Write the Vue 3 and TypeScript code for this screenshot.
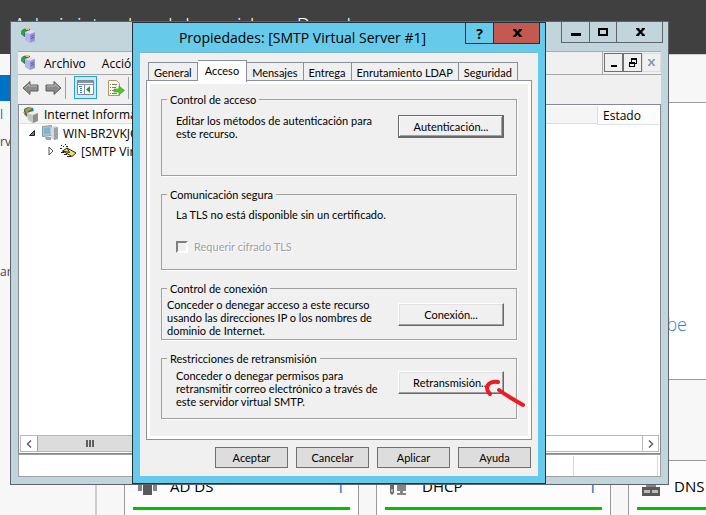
<script setup lang="ts">
import { ref } from 'vue'

interface Role { name: string; icon: 'adds' | 'dhcp' | 'dns'; count: number }

const roles: Role[] = [
  { name: 'AD DS', icon: 'adds', count: 1 },
  { name: 'DHCP', icon: 'dhcp', count: 1 },
  { name: 'DNS', icon: 'dns', count: 1 },
]
const tabs: string[] = ['General', 'Acceso', 'Mensajes', 'Entrega', 'Enrutamiento LDAP', 'Seguridad']
const activeTab = ref<string>('Acceso')
const actions: string[] = ['Aceptar', 'Cancelar', 'Aplicar', 'Ayuda']
const requireTls = ref<boolean>(false)
</script>

<template>
  <div class="desktop">
    <header class="manager-head">Administrador del servidor <span class="crumb">▸</span> Panel</header>
    <div class="manager-body">
      <nav class="sidebar">
        <span class="side-active"></span>
        <span class="side-item">l</span>
        <span class="side-item">rvi</span>
        <span class="side-item side-last">ar</span>
      </nav>
      <main class="board">
        <div class="band"></div>
        <section class="welcome"><span>be</span></section>
        <div class="roles">
          <article v-for="role in roles" :key="role.name" class="role">
            <div class="role-head">
              <svg v-if="role.icon === 'adds'" width="20" height="20" viewBox="0 0 20 20">
                <path fill="#858585" d="M0 3h4v10H0zM15 3h4v10h-4z" />
                <path fill="#595959" d="M5 1h9v16H5z" />
              </svg>
              <svg v-else-if="role.icon === 'dhcp'" width="20" height="20" viewBox="0 0 20 20">
                <path fill="#6b6b6b" d="M0 2h4v13l-2 2-2-2z" />
                <path fill="#858585" d="M7 2h9v11H7zM10 13h3v2h3v2H7v-2h3z" />
                <path fill="#fff" d="M1.500 11h1v3h-1z" />
              </svg>
              <svg v-else width="20" height="20" viewBox="0 0 20 20">
                <path fill="#858585" d="M4 3h10v6H4z" />
                <path fill="#595959" d="M0 9h18v9H0z" />
                <path fill="#bbb" d="M2 12h6v3H2zM10 12h6v3h-6z" />
              </svg>
              <h2>{{ role.name }}</h2>
              <span class="count">{{ role.count }}</span>
            </div>
            <div class="role-bar"></div>
          </article>
        </div>
      </main>
    </div>

    <section class="console">
      <div class="console-title">
        <svg width="16" height="16" viewBox="0 0 16 16">
          <path fill="#2462ad" d="M1 2l4-2 4 1v6L4 9 0 6z" />
          <path fill="#35a03a" d="M0 3l3-2 2 2-2 3 1 3-3-2z" />
          <path fill="#f0c52e" d="M4 0h4v2H5z" />
          <path fill="#dcdcfa" d="M4 4l5-2 5 2v9l-5 2-5-3z" />
          <path fill="#b4b4ea" d="M4 4l5 2v9l-5-3z" />
          <path fill="#9896d2" d="M9 6l5-2v9l-5 2z" />
          <path fill="#5a579c" d="M10 8l3-1v1l-3 1zM10 10l3-1v1l-3 1z" />
        </svg>
        <div class="window-buttons">
          <button type="button" aria-label="Minimizar">
            <svg width="14" height="12" viewBox="0 0 14 12"><path d="M2 7h10v3H2z" /></svg>
          </button>
          <button type="button" aria-label="Maximizar">
            <svg width="14" height="12" viewBox="0 0 14 12"><path fill-rule="evenodd" d="M2 2h10v8H2zM4 4v4h6V4z" /></svg>
          </button>
          <button type="button" class="wide" aria-label="Cerrar">
            <svg width="14" height="12" viewBox="0 0 14 12"><path d="M3 2h3l1 2h1l1-2h3v1L9 6l3 3v1H9L8 8H7l-1 2H3V9l3-3-3-3z" /></svg>
          </button>
        </div>
      </div>

      <div class="client">
        <div class="menubar">
          <div class="menus">
            <svg width="16" height="16" viewBox="0 0 16 16">
              <path fill="#2462ad" d="M1 2l4-2 4 1v6L4 9 0 6z" />
              <path fill="#35a03a" d="M0 3l3-2 2 2-2 3 1 3-3-2z" />
              <path fill="#f0c52e" d="M4 0h4v2H5z" />
              <path fill="#dcdcfa" d="M4 4l5-2 5 2v9l-5 2-5-3z" />
              <path fill="#b4b4ea" d="M4 4l5 2v9l-5-3z" />
              <path fill="#9896d2" d="M9 6l5-2v9l-5 2z" />
              <path fill="#5a579c" d="M10 8l3-1v1l-3 1zM10 10l3-1v1l-3 1z" />
            </svg>
            <button type="button">Archivo</button>
            <button type="button">Acción</button>
          </div>
          <div class="mdi">
            <button type="button" aria-label="Minimizar ventana">
              <svg width="11" height="11" viewBox="0 0 11 11"><path d="M3 8h6v2H3z" /></svg>
            </button>
            <button type="button" aria-label="Restaurar ventana">
              <svg width="11" height="11" viewBox="0 0 11 11"><path fill-rule="evenodd" d="M4 1h6v6H8v3H2V5h2zM5 3v2h3v1h1V3zM3 7v2h4V7z" /></svg>
            </button>
            <button type="button" disabled aria-label="Cerrar ventana">
              <svg width="11" height="11" viewBox="0 0 11 11"><path fill="#8e9aae" d="M2 2h2l1 2h1l1-2h2v1L7 5v1l2 2v1H7L6 7H5L4 9H2V8l2-2V5L2 3z" /></svg>
            </button>
          </div>
        </div>

        <div class="toolbar">
          <button type="button" aria-label="Atrás">
            <svg width="17" height="16" viewBox="0 0 17 16"><path fill="#8b8b8b" stroke="#5e5e5e" d="M1 8l7-6.500V5h8v6H8v3.500z" /><path fill="none" stroke="#b9b9b9" d="M3 8l4-4v2h8" /></svg>
          </button>
          <button type="button" aria-label="Adelante">
            <svg width="17" height="16" viewBox="0 0 17 16"><path fill="#8b8b8b" stroke="#5e5e5e" d="M16 8L9 1.500V5H1v6h8v3.500z" /><path fill="none" stroke="#b9b9b9" d="M2 6h8V4l4 4" /></svg>
          </button>
          <span class="divider"></span>
          <button type="button" class="pressed" aria-label="Mostrar árbol">
            <svg width="17" height="15" viewBox="0 0 17 15">
              <path fill="#fff" stroke="#7b8a9a" d="M.5.500h16v14H.500z" />
              <path fill="#8495a8" d="M1 1h15v2H1zM1 4h15v1H1zM7 5h1v9H7z" />
              <path fill="#3a75b8" d="M2 6h3v1H2zM3 8h2v1H3zM3 10h2v1H3zM3 12h2v1H3z" />
              <path fill="#1d9b2f" d="M13 6v7L9 9.500z" />
            </svg>
          </button>
          <button type="button" class="export" aria-label="Exportar lista">
            <svg width="17" height="16" viewBox="0 0 17 16">
              <path fill="#fffbe0" stroke="#a99a66" d="M.5.500h8l3 3v12H.500z" />
              <path fill="#77778f" d="M2 4h1v1H2zM4 4h5v1H4zM2 7h1v1H2zM4 7h4v1H4zM2 10h1v1H2zM4 10h3v1H4zM2 13h1v1H2zM4 13h5v1H4z" />
              <path fill="#54c42c" stroke="#2f9a1c" stroke-width=".6" d="M6 9h5V6l5.500 4.500L11 15v-3H6z" />
            </svg>
          </button>
          <span class="divider"></span>
        </div>

        <div class="panes">
          <ul class="tree">
            <li class="selected">
              <svg width="16" height="16" viewBox="0 0 16 16">
                <path fill="#1f7f8a" d="M1 2l4-2 5 1 1 4-7 5-3-3z" />
                <path fill="#d98a2b" d="M2 3l4-3 3 2-4 2-1 3zM0 5h2v3z" />
                <path fill="#ecece8" d="M4 6l6-2 5 2v8l-5 2-5-3z" />
                <path fill="#c4c4c0" d="M4 6l6 2v8l-5-3z" />
                <path fill="#8f8f8b" d="M10 8l5-2v8l-5 2z" />
              </svg>
              <span>Internet Information</span>
            </li>
            <li class="level1">
              <svg class="twist" width="8" height="8" viewBox="0 0 8 8"><path fill="#777" stroke="#222" d="M6.500 1.500v5h-5z" /></svg>
              <svg width="17" height="16" viewBox="0 0 17 16">
                <path fill="#b4c4cc" stroke="#8799a3" d="M.5 1.500l9-1v10l-9 1z" />
                <path fill="#7fb4d0" d="M2 3l6-.7v6.500L2 9.500z" />
                <path fill="#d4dade" d="M9 2l4-1 3 1v12l-4 1-3-2z" />
                <path fill="#98a5ac" d="M12 3l4-1v12l-4 1zM3 12h6v3H4z" />
              </svg>
              <span>WIN-BR2VKJC</span>
            </li>
            <li class="level2">
              <svg class="twist" width="6" height="10" viewBox="0 0 6 10"><path fill="#fff" stroke="#555" d="M1 1l4 4-4 4z" /></svg>
              <svg width="17" height="14" viewBox="0 0 17 14">
                <path fill="#f2e05a" stroke="#222" d="M2.500 7L7 4l9 5-4 3.500z" />
                <path fill="none" stroke="#222" d="M2.500 7l7 1.500L7 4" />
                <path fill="#222" d="M1 1h1v1H1zM3 2h1v1H3zM5 0h1v1H5zM6 2h2v1H6zM0 4h2v1H0zM1 8h3v1H1zM4 10h3v1H4zM7 12h4v1H7z" />
              </svg>
              <span>[SMTP Virtual Server #1]</span>
            </li>
          </ul>
          <div class="list-head"><span>Estado</span></div>
          <div class="scroll">
            <button type="button" aria-label="Desplazar a la izquierda">
              <svg width="8" height="8" viewBox="0 0 8 8"><path fill="none" stroke="#606060" stroke-width="1.500" d="M6 .5L2.500 4 6 7.500" /></svg>
            </button>
            <div class="thumb"><i></i><i></i><i></i></div>
            <button type="button" aria-label="Desplazar a la derecha">
              <svg width="8" height="8" viewBox="0 0 8 8"><path fill="none" stroke="#606060" stroke-width="1.500" d="M2 .5L5.500 4 2 7.500" /></svg>
            </button>
          </div>
        </div>
        <div class="status"><span></span></div>
      </div>
    </section>

    <section class="dialog" role="dialog" aria-labelledby="dialog-name">
      <div class="dialog-title">
        <h1 id="dialog-name">Propiedades: [SMTP Virtual Server #1]</h1>
        <div class="dialog-buttons">
          <button type="button" class="help">?</button>
          <button type="button" class="close" aria-label="Cerrar">
            <svg width="14" height="12" viewBox="0 0 14 12"><path d="M3 2h3l1 2h1l1-2h3v1L9 6l3 3v1H9L8 8H7l-1 2H3V9l3-3-3-3z" /></svg>
          </button>
        </div>
      </div>
      <div class="dialog-client">
        <div class="tabs" role="tablist">
          <button
            v-for="tab in tabs"
            :key="tab"
            type="button"
            role="tab"
            :aria-selected="tab === activeTab"
            :class="{ active: tab === activeTab }"
            @click="activeTab = tab"
          >{{ tab }}</button>
        </div>
        <div class="page">
          <fieldset class="access">
            <legend>Control de acceso</legend>
            <p>Editar los métodos de autenticación para<br>este recurso.</p>
            <button type="button" class="raised default">Autenticación...</button>
          </fieldset>
          <fieldset class="secure">
            <legend>Comunicación segura</legend>
            <p>La TLS no está disponible sin un certificado.</p>
            <label><input v-model="requireTls" type="checkbox" disabled>Requerir cifrado TLS</label>
          </fieldset>
          <fieldset class="connection">
            <legend>Control de conexión</legend>
            <p>Conceder o denegar acceso a este recurso<br>usando las direcciones IP o los nombres de<br>dominio de Internet.</p>
            <button type="button" class="raised">Conexión...</button>
          </fieldset>
          <fieldset class="relay">
            <legend>Restricciones de retransmisión</legend>
            <p>Conceder o denegar permisos para<br>retransmitir correo electrónico a través de<br>este servidor virtual SMTP.</p>
            <div class="marked">
              <button type="button" class="raised">Retransmisión...</button>
              <svg class="mark" width="44" height="34" viewBox="0 0 44 34">
                <path d="M16 4C11 3 5 5 5 10c0 3 1 4 3 6M17 12c8 6 14 9 24 15" />
              </svg>
            </div>
          </fieldset>
        </div>
        <div class="actions">
          <button v-for="action in actions" :key="action" type="button">{{ action }}</button>
        </div>
      </div>
    </section>
  </div>
</template>

<style>
body {
  margin: 0;
}
</style>

<style scoped>
.desktop {
  position: relative;
  display: flex;
  flex-direction: column;
  height: 100vh;
  overflow: hidden;
  background: #f7f7f7;
  font-family: "Open Sans", "Noto Sans", sans-serif;
  font-size: 12px;
  color: #000;
}
.desktop * {
  box-sizing: border-box;
}
button {
  margin: 0;
  padding: 0;
  border: 0;
  background: none;
  font: inherit;
  color: inherit;
}
svg {
  display: block;
  flex: none;
}

/* Server manager behind the windows */
.manager-head {
  flex: none;
  height: 54px;
  padding: 10px 13px;
  background: #404040;
  color: #fff;
  font-size: 22px;
  font-weight: 300;
  line-height: 30px;
  white-space: nowrap;
}
.crumb {
  font-family: "DejaVu Sans", sans-serif;
  font-size: 18px;
}
.manager-body {
  display: flex;
  flex: 1;
  min-height: 0;
}
.sidebar {
  display: flex;
  flex-direction: column;
  flex: none;
  width: 97px;
  padding-top: 21px;
  border-right: 2px solid #ccc;
  color: #444;
  line-height: 27px;
}
.side-active {
  height: 26px;
  background: #0072c6;
}
.side-active + .side-item {
  color: #0072c6;
}
.side-last {
  margin-top: 103px;
}
.board {
  flex: 1;
  min-width: 0;
}
.band {
  height: 49px;
  border-top: 1px solid #ccc;
  border-bottom: 1px solid #999;
}
.welcome {
  display: flex;
  justify-content: flex-end;
  height: 277px;
  margin-bottom: 80px;
  padding: 208px 19px 0 0;
  border-bottom: 1px solid #999;
  background: #fff;
  color: #2a88c8;
  font-size: 18px;
  font-weight: 300;
  line-height: 26px;
}
.roles {
  display: flex;
  gap: 17px;
  margin-left: 27px;
}
.role {
  flex: none;
  width: 235px;
  height: 70px;
  padding: 15px 8px 0;
  border: 1px solid #999;
  background: #fcfcfc;
}
.role-head {
  display: flex;
  gap: 12px;
  height: 31px;
  padding: 0 5px;
}
.role-head svg {
  margin-top: 2px;
}
.role-head h2 {
  flex: 1;
  margin: 0;
  font-size: 15px;
  font-weight: 400;
  line-height: 20px;
}
.count {
  color: #0072c6;
  font-size: 16px;
  line-height: 22px;
}
.role-bar {
  height: 3px;
  background: #00c000;
}

/* Console window */
.console {
  position: absolute;
  inset: 21px 37px 30px 10px;
  display: flex;
  flex-direction: column;
  padding: 0 7px 7px;
  border: 1px solid #5f636c;
  background: #c3d5dc;
}
.console-title {
  display: flex;
  justify-content: space-between;
  flex: none;
  height: 29px;
  padding: 6px 0 0 3px;
}
.window-buttons {
  display: flex;
  height: 21px;
  margin: -6px -2px 0 0;
  border: solid #5f636c;
  border-width: 0 1px 1px;
}
.window-buttons button {
  display: flex;
  align-items: center;
  justify-content: center;
  width: 27px;
}
.window-buttons button + button {
  border-left: 1px solid #5f636c;
}
.window-buttons .wide {
  width: 46px;
}
.client {
  display: flex;
  flex-direction: column;
  flex: 1;
  min-height: 0;
  background: #f0f0f0;
}
.menubar {
  display: flex;
  flex: none;
  height: 24px;
  border-top: 1px solid #a8acb0;
  border-bottom: 1px solid #a8a8a8;
}
.menus {
  display: flex;
  flex: 1;
  align-items: center;
  padding-left: 3px;
  border-right: 1px solid #a8a8a8;
}
.menus button {
  margin-left: 7px;
}
.menus button + button {
  margin-left: 16px;
}
.mdi {
  display: flex;
  padding: 1px 0 0 1px;
}
.mdi button {
  display: flex;
  align-items: center;
  justify-content: center;
  width: 19px;
  height: 19px;
  border: 1px solid #707070;
}
.mdi button:disabled {
  border-color: #ddd;
}
.toolbar {
  display: flex;
  align-items: center;
  flex: none;
  height: 29px;
  padding: 0 0 4px 4px;
  gap: 6px;
}
.toolbar .divider {
  width: 1px;
  height: 22px;
  margin-left: -3px;
  background: #a0a0a0;
}
.toolbar .pressed {
  margin-left: 2px;
  padding: 3px 2px;
  border: 1px solid #26a0da;
  background: #cfe8f5;
}
.toolbar .export {
  margin-left: 5px;
}
.panes {
  display: grid;
  grid-template-columns: 1fr 62px;
  grid-template-rows: 1fr 17px;
  flex: 1;
  min-height: 0;
  padding: 1px;
  border: 1px solid #828790;
  background: #fff;
}
.tree {
  margin: 0;
  padding: 0;
  list-style: none;
  white-space: nowrap;
}
.tree li {
  display: flex;
  align-items: center;
  gap: 5px;
  height: 18px;
  padding-left: 3px;
}
.tree .selected {
  border-bottom: 1px solid #ddd;
  background: #f5f5f5;
}
.tree .level1 {
  gap: 4px;
  padding-left: 8px;
}
.tree .level2 {
  gap: 4px;
  padding-left: 28px;
}
.twist + svg {
  margin-left: 2px;
}
.list-head {
  height: 19px;
  padding-left: 5px;
  border-bottom: 1px solid #ddd;
  border-left: 1px solid #ddd;
  background: #fcfcfc;
  line-height: 19px;
}
.scroll {
  display: flex;
  grid-column: 1 / -1;
  border: 1px solid #b8b8b8;
}
.scroll button {
  display: flex;
  align-items: center;
  justify-content: center;
  width: 16px;
}
.scroll button:last-child {
  margin-left: auto;
  border-left: 1px solid #b8b8b8;
}
.thumb {
  display: flex;
  align-items: center;
  justify-content: center;
  gap: 1px;
  width: 105px;
  border: solid #a0a0a0;
  border-width: 0 1px;
  background: #dcdcdc;
}
.thumb i {
  width: 2px;
  height: 7px;
  background: #606060;
}
.status {
  flex: none;
  height: 23px;
  padding: 1px 2px 1px 0;
  border: 1px solid #a0a0a0;
  background: #fff;
}
.status span {
  display: block;
  width: 85px;
  height: 20px;
  margin-left: auto;
  border: solid #d8d8d8;
  border-width: 0 1px;
}

/* Properties dialog */
.dialog {
  position: absolute;
  top: 22px;
  left: 132px;
  width: 414px;
  padding: 0 7px 7px;
  border: 1px solid #22303a;
  background: #66caea;
  font-family: Lato, "Liberation Sans", sans-serif;
  font-size: 11px;
  line-height: 13px;
}
.dialog-title {
  display: flex;
  height: 29px;
}
.dialog-title h1 {
  flex: 1;
  margin: 0;
  text-align: center;
  font-family: "Open Sans", "Noto Sans", sans-serif;
  font-size: 14px;
  font-weight: 400;
  line-height: 30px;
  white-space: nowrap;
}
.dialog-buttons {
  display: flex;
  height: 21px;
  margin-right: -2px;
  border: solid #22303a;
  border-width: 0 1px 1px;
}
.dialog-buttons button {
  display: flex;
  align-items: center;
  justify-content: center;
  width: 27px;
}
.dialog-buttons .help {
  font-family: "Open Sans", sans-serif;
  font-size: 14px;
  font-weight: 700;
}
.dialog-buttons .close {
  width: 46px;
  border-left: 1px solid #22303a;
  background: #c35950;
}
.dialog-client {
  padding: 7px 6px 8px;
  border-top: 1px solid #7fb4cc;
  background: #f0f0f0;
}
.tabs {
  display: flex;
  align-items: flex-end;
  height: 20px;
  padding-left: 2px;
}
.tabs button {
  height: 18px;
  padding: 1px 5px 0;
  border: 1px solid #8b8f99;
  border-bottom: 0;
  border-left-width: 0;
  white-space: nowrap;
}
.tabs button:first-child {
  border-left-width: 1px;
}
.tabs .active {
  position: relative;
  height: 22px;
  margin-bottom: -2px;
  padding: 0 7px 3px;
  background: #fff;
}
.page {
  display: flex;
  flex-direction: column;
  gap: 12px;
  padding: 12px 14px 20px;
  border: 1px solid #8b8f99;
  box-shadow: inset 0 0 0 3px #fff;
}
fieldset {
  display: flex;
  align-items: flex-start;
  justify-content: space-between;
  min-width: 0;
  margin: 0;
  padding: 0 12px 0 14px;
  border: 1px solid #a0a0a0;
  box-shadow: 1px 1px 0 #fff;
}
legend {
  height: 13px;
  margin-left: -9px;
  padding: 0 3px;
}
fieldset p {
  margin: 0;
  white-space: nowrap;
}
.access {
  height: 83px;
}
.access p {
  padding-top: 8px;
}
.access .raised {
  margin-top: 9px;
}
.secure {
  flex-direction: column;
  justify-content: flex-start;
  height: 82px;
}
.secure p {
  padding-top: 7px;
}
.secure label {
  display: flex;
  align-items: center;
  gap: 6px;
  margin-top: 19px;
  color: #a0a0a0;
  text-shadow: 1px 1px 0 #fff;
}
.secure input {
  appearance: none;
  width: 12px;
  height: 12px;
  margin: 0;
  border: 2px solid;
  border-color: #808080 #fff #fff #808080;
}
.connection {
  height: 58px;
  padding-left: 5px;
}
.connection legend {
  margin-left: 0;
}
.connection p {
  padding-top: 3px;
}
.connection .raised {
  margin-top: 8px;
}
.relay {
  height: 67px;
}
.relay p {
  padding-top: 4px;
}
.relay .raised {
  margin-top: 6px;
}
.raised {
  width: 106px;
  height: 23px;
  border: 1px solid;
  border-color: #fff #696969 #696969 #fff;
  box-shadow: inset -1px -1px 0 #a0a0a0, inset 1px 1px 0 #e3e3e3;
}
.raised.default {
  border: 1px solid #696969;
  box-shadow: inset -1px -1px 0 #696969, inset 1px 1px 0 #fff, inset -2px -2px 0 #a0a0a0;
}
.marked {
  position: relative;
}
.mark {
  position: absolute;
  top: 13px;
  left: 84px;
  fill: none;
  stroke: #ec1c24;
  stroke-width: 4;
  stroke-linecap: round;
  pointer-events: none;
}
.actions {
  display: flex;
  justify-content: flex-end;
  gap: 8px;
  padding: 7px 1px 0 0;
}
.actions button {
  width: 73px;
  height: 21px;
  border: 1px solid #707070;
  background: #ddd;
}
</style>
